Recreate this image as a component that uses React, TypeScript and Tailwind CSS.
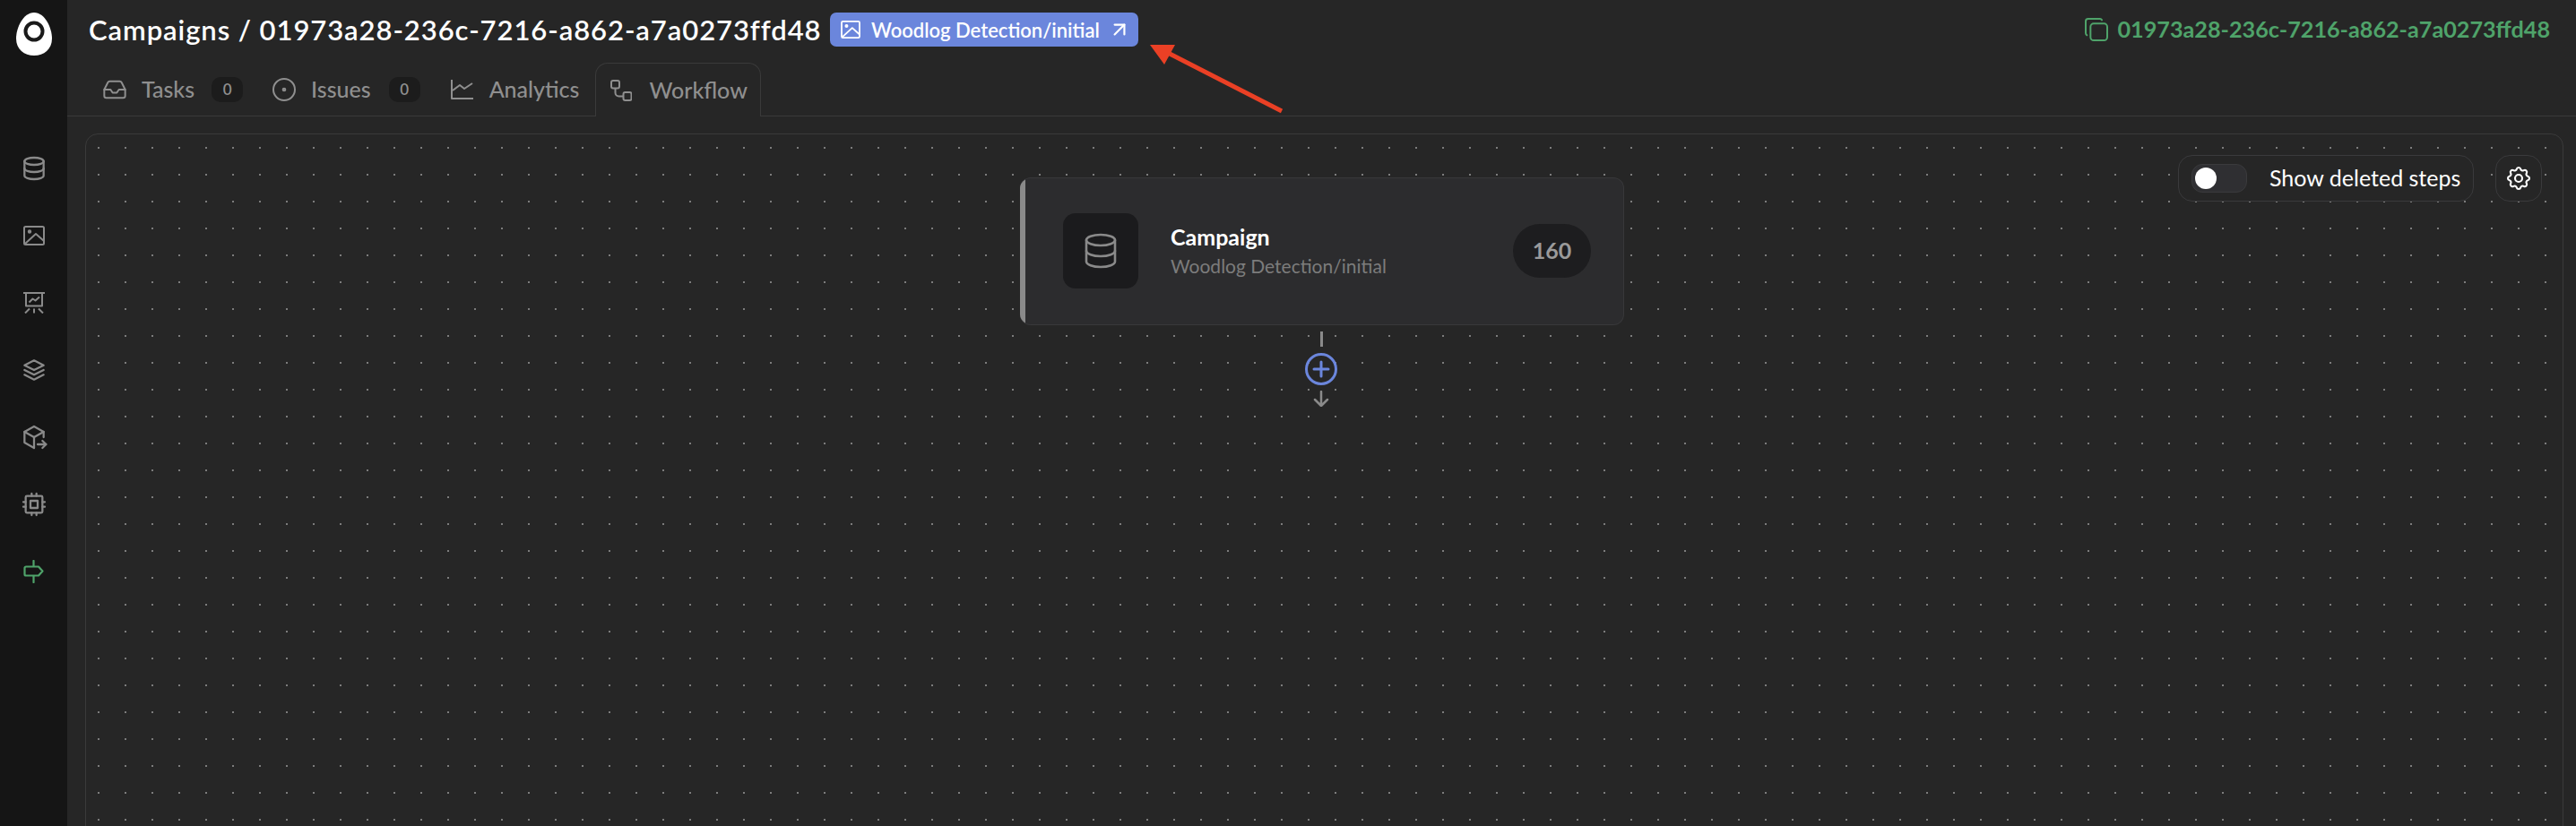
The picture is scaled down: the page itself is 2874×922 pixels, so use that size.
import { ArrowUpRight, Inbox } from "lucide-react";
import {
  TbCircleDot,
  TbCopy,
  TbCpu,
  TbDatabase,
  TbPackageExport,
  TbSettings,
  TbStack2,
} from "react-icons/tb";

function Logo() {
  return (
    <svg width="40" height="48" viewBox="0 0 40 48" className="block">
      <path d="M20 0C32 0 40 17 40 29C40 41 31 48 20 48C9 48 0 41 0 29C0 17 8 0 20 0Z" fill="#fff" />
      <circle cx="20" cy="21" r="9.5" fill="none" stroke="#1a1a1a" strokeWidth="4" />
    </svg>
  );
}

function ImageIcon({ width, height }: { width: number; height: number }) {
  return (
    <svg width={width} height={height} viewBox="0 0 24 22" fill="none" stroke="currentColor" strokeWidth="2" strokeLinejoin="round">
      <rect x="1" y="1" width="22" height="20" rx="1.500" />
      <circle cx="7" cy="6.500" r="1.200" fill="currentColor" />
      <path d="M1.500 20.500L14 9l9 8" />
    </svg>
  );
}

function PresentationIcon() {
  return (
    <svg width="24" height="24" viewBox="0 0 24 24" fill="none" stroke="currentColor" strokeWidth="2" strokeLinejoin="round">
      <path d="M0 1h24M3 1v14.500h18V1" />
      <path d="M6.500 11.500l4-4 3 2 4.500-4" />
      <path d="M12 18.500v5M7 18.500l-5 5M17 18.500l5 5" />
    </svg>
  );
}

function SignIcon() {
  return (
    <svg width="24" height="26" viewBox="0 0 24 26" fill="none" stroke="currentColor" strokeWidth="2.200" strokeLinecap="round" strokeLinejoin="round">
      <path d="M11.500 1v6M11.500 18v7" />
      <path d="M1.500 9a1.500 1.500 0 0 1 1.500-1.500h14l4.500 5-4.500 5H3a1.500 1.500 0 0 1-1.500-1.500z" />
    </svg>
  );
}

function AnalyticsIcon() {
  return (
    <svg width="25" height="22" viewBox="0 0 25 22" fill="none" stroke="currentColor" strokeWidth="2" strokeLinejoin="round">
      <path d="M1 0v21h24" />
      <path d="M2 12l8-6 5 4 9-6" />
    </svg>
  );
}

function WorkflowIcon() {
  return (
    <svg width="24" height="24" viewBox="0 0 24 24" fill="none" stroke="currentColor" strokeWidth="2" strokeLinejoin="round">
      <rect x="1" y="1" width="9" height="8.500" rx="2" />
      <rect x="14.500" y="14" width="9" height="9" rx="2" />
      <path d="M5.500 9.500v5a4 4 0 0 0 4 4h5" />
    </svg>
  );
}

function CountBadge({ value, className }: { value: number; className: string }) {
  return (
    <span className={`flex h-[28px] w-[35px] items-center justify-center rounded-[10px] bg-[#1c1c1c] text-[17px] font-semibold text-[#8f8f8f] ${className}`}>
      {value}
    </span>
  );
}

export default function App() {
  return (
    <div className="relative flex h-[922px] w-full overflow-hidden bg-[#262626] font-['Lato','Noto_Sans',sans-serif]">
      {/* Sidebar */}
      <aside className="flex w-[75px] shrink-0 flex-col items-center bg-[#151515] pt-[14px] text-[#8a8a8a]">
        <Logo />
        <nav className="mt-[110px] flex flex-col items-center gap-[43px] pl-[1px]">
          <TbDatabase size={32} strokeWidth={1.7} />
          <span className="flex h-[32px] items-center">
            <ImageIcon width={24} height={22} />
          </span>
          <span className="flex h-[32px] items-center">
            <PresentationIcon />
          </span>
          <TbStack2 size={32} strokeWidth={1.7} />
          <TbPackageExport size={32} strokeWidth={1.7} />
          <TbCpu size={32} strokeWidth={1.7} />
          <span className="flex h-[32px] items-center text-[#4fa36a]">
            <SignIcon />
          </span>
        </nav>
      </aside>

      <main className="flex min-w-0 flex-1 flex-col">
        {/* Title row */}
        <div className="flex h-[70px] shrink-0 items-start justify-between pl-[24px] pr-[29px] pt-[14px]">
          <div className="flex items-center gap-[14px]">
            <h1 className="w-[813px] text-[31px] leading-[38px] font-semibold tracking-[0.92px] whitespace-nowrap text-white">
              Campaigns / 01973a28-236c-7216-a862-a7a0273ffd48
            </h1>
            <a className="flex h-[38px] w-[344px] items-center rounded-[7px] bg-[#6b86dc] pl-[12px] text-[22px] font-semibold text-white">
              <ImageIcon width={22} height={20} />
              <span className="ml-[12px]">Woodlog Detection/initial</span>
              <ArrowUpRight size={26} strokeWidth={2} className="ml-[9px]" />
            </a>
          </div>
          <div className="flex h-[38px] items-center gap-[7px] text-[25.2px] font-bold text-[#4fa36a]">
            <TbCopy size={32} strokeWidth={1.5} />
            <span>01973a28-236c-7216-a862-a7a0273ffd48</span>
          </div>
        </div>

        {/* Tabs */}
        <div className="flex h-[60px] shrink-0 items-stretch border-b border-[#3a3a3a] pl-[39px] text-[25px] font-medium text-[#8f8f8f]">
          <div className="flex items-center">
            <Inbox size={28} strokeWidth={1.7} />
            <span className="ml-[16px]">Tasks</span>
            <CountBadge value={0} className="ml-[19px]" />
          </div>
          <div className="ml-[30px] flex items-center">
            <TbCircleDot size={32} strokeWidth={1.5} />
            <span className="ml-[14px]">Issues</span>
            <CountBadge value={0} className="ml-[20px]" />
          </div>
          <div className="ml-[34px] flex items-center">
            <AnalyticsIcon />
            <span className="ml-[18px]">Analytics</span>
          </div>
          <div className="relative -mb-px ml-[18px] flex h-[60px] w-[185px] items-center rounded-t-[14px] border border-b-0 border-[#3a3a3a] bg-[#262626] pl-[16px]">
            <WorkflowIcon />
            <span className="ml-[19px]">Workflow</span>
          </div>
        </div>

        {/* Canvas */}
        <section className="relative ml-[20px] mr-[14px] mt-[19px] h-[800px] shrink-0 rounded-[14px] border border-[#3a3a3a] bg-[radial-gradient(circle,#7c7c7c_1px,transparent_1.4px)] bg-[length:30px_30px] bg-[position:-1px_0px]">
          {/* Controls */}
          <div className="absolute right-[23px] top-[23px] flex gap-[24px]">
            <div className="flex h-[52px] w-[330px] items-center rounded-[16px] border border-[#3a3a3c] bg-[#262626] pl-[14px] text-[25px] text-white">
              <span className="flex h-[32px] w-[62px] items-center rounded-[12px] border border-[#3a3a3c] bg-[#2f2f32] pl-[3px]">
                <span className="h-[24px] w-[24px] rounded-full bg-white" />
              </span>
              <span className="ml-[25px]">Show deleted steps</span>
            </div>
            <button className="flex h-[52px] w-[52px] items-center justify-center rounded-[16px] border border-[#3a3a3c] bg-[#262626] text-white">
              <TbSettings size={32} strokeWidth={1.6} />
            </button>
          </div>

          {/* Campaign node */}
          <div className="absolute left-[1042px] top-[48px] flex h-[165px] w-[674px] items-center overflow-hidden rounded-[12px] border border-l-0 border-[#38383a] bg-[#2c2c2e] pb-[2px] pl-[48px] pr-[36px]">
            <span className="absolute bottom-0 left-0 top-0 w-[6px] bg-[#8a8a8a]" />
            <div className="flex h-[84px] w-[84px] items-center justify-center rounded-[14px] bg-[#1b1b1d] text-[#8a8a8a]">
              <TbDatabase size={48} strokeWidth={1.3} />
            </div>
            <div className="ml-[36px] flex-1">
              <div className="text-[25px] leading-[32px] font-bold text-white">Campaign</div>
              <div className="mt-[2px] text-[21px] leading-[30px] text-[#7c7c7c]">Woodlog Detection/initial</div>
            </div>
            <div className="flex h-[60px] w-[87px] items-center justify-center rounded-full bg-[#1d1d1f] text-[25px] font-bold text-[#9a9a9a]">
              160
            </div>
          </div>

          {/* Add step connector */}
          <div className="absolute left-[1360px] top-[220px] flex w-[36px] flex-col items-center">
            <span className="h-[17px] w-[3px] bg-[#8a8a8a]" />
            <svg width="36" height="36" viewBox="0 0 36 36" fill="none" stroke="#6b86dc" strokeWidth="3" strokeLinecap="round" className="mt-[7px]">
              <circle cx="18" cy="18" r="16.500" />
              <path d="M18 10v16M10 18h16" />
            </svg>
            <svg width="18" height="18" viewBox="0 0 18 18" fill="none" stroke="#8a8a8a" strokeWidth="2.500" strokeLinecap="round" strokeLinejoin="round" className="mt-[6px]">
              <path d="M9 1v16M2 10l7 7 7-7" />
            </svg>
          </div>
        </section>
      </main>

      {/* Annotation arrow drawn over the page */}
      <svg className="pointer-events-none absolute left-[1270px] top-[40px]" width="170" height="95" viewBox="1270 40 170 95">
        <path d="M1305 60L1430 124" stroke="#ea4025" strokeWidth="5" />
        <path d="M1283 50H1311L1299 72Z" fill="#ea4025" />
      </svg>
    </div>
  );
}
